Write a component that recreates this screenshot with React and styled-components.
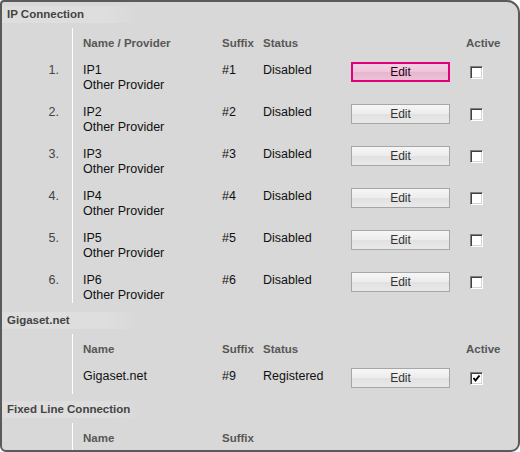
import React from 'react';
import styled, { createGlobalStyle } from 'styled-components';

const GlobalStyle = createGlobalStyle`
  html, body {
    margin: 0;
    padding: 0;
    background: #ffffff;
  }
  body {
    font-family: "Liberation Sans", Arial, sans-serif;
  }
`;

const Panel = styled.div`
  width: 520px;
  height: 452px;
  box-sizing: border-box;
  border: 2px solid #5a5a5a;
  border-radius: 4px 13px 9px 6px;
  background: #d8d8d8;
  overflow: hidden;
  font-size: 12.5px;
  color: #111;
`;

const Title = styled.div`
  display: inline-block;
  margin-top: ${(p) => p.$top}px;
  min-width: 118px;
  padding: 0 14px 0 5px;
  line-height: 17px;
  font-size: 11.5px;
  font-weight: bold;
  color: #444;
  background: linear-gradient(to right, #dedede 75%, #d8d8d8);
`;

const Table = styled.div`
  margin-top: 5px;
  padding-bottom: ${(p) => p.$bottom || 0}px;
  background: linear-gradient(#ffffff, #ffffff) 70px 0 / 1px 100% no-repeat;
`;

const Row = styled.div`
  display: grid;
  grid-template-columns: 71px 149px 41px 88px 99px 16px 1fr;
  align-items: start;
  line-height: 15px;
`;

const HeadRow = styled(Row)`
  padding: 8px 0 12px;
  font-size: 11.5px;
  font-weight: bold;
  color: #575757;
`;

const Rows = styled.div`
  display: flex;
  flex-direction: column;
  gap: 12px;
`;

const DataRow = styled(Row)`
  min-height: ${(p) => (p.$single ? 19 : 30)}px;
`;

const Num = styled.div`
  text-align: right;
  padding-right: 14px;
  color: #444;
`;

const Name = styled.div`
  padding-left: 10px;
`;

const EditButton = styled.button`
  margin-top: -1px;
  width: 99px;
  height: 20px;
  box-sizing: border-box;
  padding: 0;
  font-family: "Liberation Sans", Arial, sans-serif;
  font-size: 12px;
  cursor: pointer;
  color: ${(p) => (p.$active ? '#2a0016' : '#333')};
  border: ${(p) => (p.$active ? '2px solid #e2007a' : '1px solid #a6a6a6')};
  background: ${(p) =>
    p.$active
      ? 'linear-gradient(#f3d2e3, #eec5da 50%, #e7b5cf 50%, #ecc2d8)'
      : 'linear-gradient(#f6f6f6, #ececec 50%, #e1e1e1 50%, #e9e9e9)'};
`;

const Box = styled.span`
  grid-column: 7;
  display: block;
  margin: 3px 0 0 4px;
  width: 13px;
  height: 13px;
  box-sizing: border-box;
  background: #fff;
  border: 1px solid;
  border-color: #808080 #ffffff #ffffff #808080;
  box-shadow: inset 1px 1px 0 #404040, inset -1px -1px 0 #d4d4d4;
  svg {
    display: block;
  }
`;

const Checkbox = ({ checked }) => (
  <Box>
    {checked && (
      <svg width="11" height="11" viewBox="0 0 11 11">
        <path d="M2.5 5 L4.5 7.5 L8.5 2.5" fill="none" stroke="#000" strokeWidth="2" />
      </svg>
    )}
  </Box>
);

const ipRows = [1, 2, 3, 4, 5, 6].map((n) => ({
  n,
  name: `IP${n}`,
  provider: 'Other Provider',
  suffix: `#${n}`,
  status: 'Disabled',
}));

const Header = ({ name, status = true }) => (
  <HeadRow>
    <span />
    <Name>{name}</Name>
    <span>Suffix</span>
    {status && <span>Status</span>}
    {status && <span />}
    {status && <span />}
    {status && <span>Active</span>}
  </HeadRow>
);

export default function App() {
  return (
    <>
      <GlobalStyle />
      <Panel>
        <Title $top={4}>IP Connection</Title>
        <Table>
          <Header name="Name / Provider" />
          <Rows>
            {ipRows.map((r) => (
              <DataRow key={r.n}>
                <Num>{r.n}.</Num>
                <Name>
                  {r.name}
                  <br />
                  {r.provider}
                </Name>
                <span>{r.suffix}</span>
                <span>{r.status}</span>
                <EditButton $active={r.n === 1}>Edit</EditButton>
                <span />
                <Checkbox />
              </DataRow>
            ))}
          </Rows>
        </Table>

        <Title $top={9}>Gigaset.net</Title>
        <Table $bottom={6}>
          <Header name="Name" />
          <DataRow $single>
            <span />
            <Name>Gigaset.net</Name>
            <span>#9</span>
            <span>Registered</span>
            <EditButton>Edit</EditButton>
            <span />
            <Checkbox checked />
          </DataRow>
        </Table>

        <Title $top={7}>Fixed Line Connection</Title>
        <Table>
          <Header name="Name" status={false} />
        </Table>
      </Panel>
    </>
  );
}
